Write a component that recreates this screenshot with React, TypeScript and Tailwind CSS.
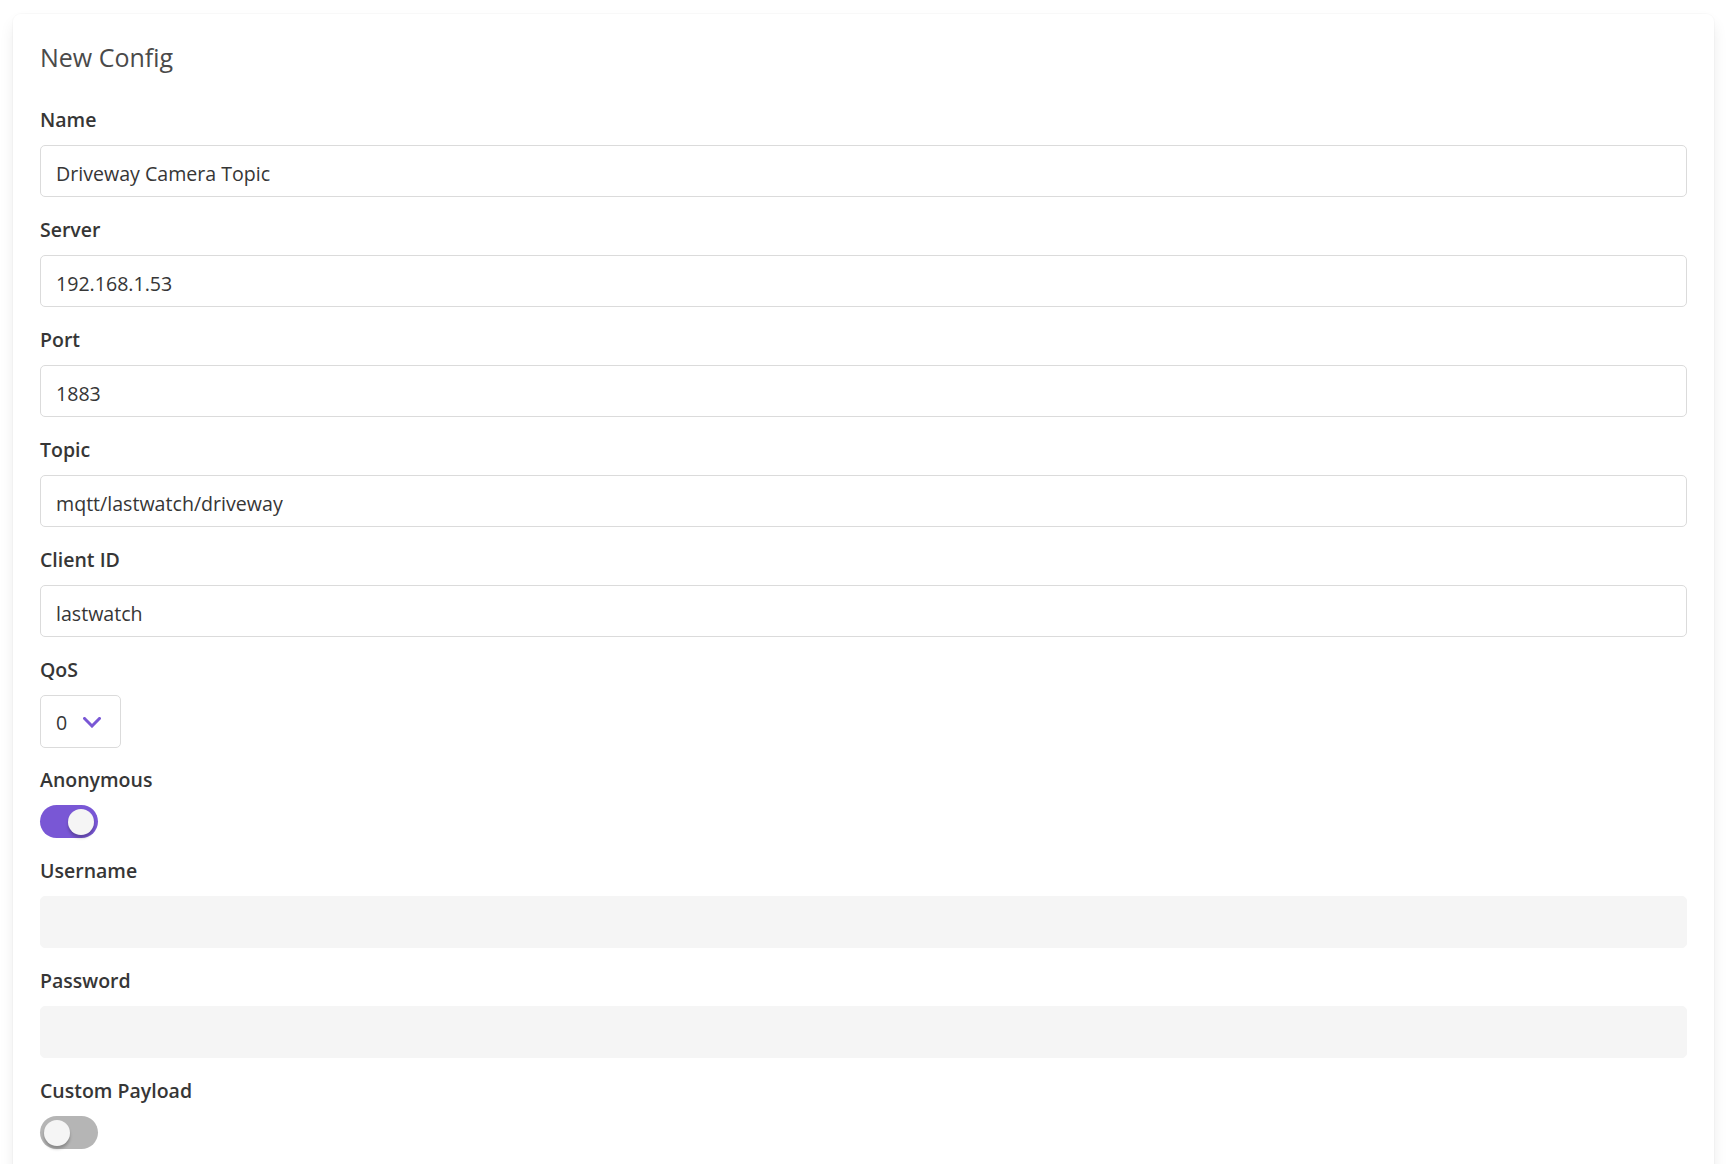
import React from "react";

const FIELDS = [
  { label: "Name", value: "Driveway Camera Topic" },
  { label: "Server", value: "192.168.1.53" },
  { label: "Port", value: "1883" },
  { label: "Topic", value: "mqtt/lastwatch/driveway" },
  { label: "Client ID", value: "lastwatch" },
];

const font = { fontFamily: '"Open Sans", "Noto Sans", sans-serif' };

const Label = ({ children }: { children: React.ReactNode }) => (
  <label className="block text-[19.5px] leading-[30px] font-semibold text-[#363636] mb-[10px]">
    {children}
  </label>
);

const TextInput = ({ value, disabled }: { value?: string; disabled?: boolean }) => (
  <input
    readOnly
    disabled={disabled}
    value={value ?? ""}
    className={
      "block w-full h-[52px] rounded-[5px] border px-[15px] pt-[4px] text-[19.6px] text-[#363636] outline-none " +
      (disabled ? "bg-[#f5f5f5] border-[#f5f5f5]" : "bg-white border-[#dbdbdb]")
    }
    style={font}
  />
);

const Toggle = ({ on }: { on: boolean }) => (
  <div
    className={
      "relative w-[58px] h-[33px] rounded-full " + (on ? "bg-[#7957d5]" : "bg-[#b5b5b5]")
    }
  >
    <span
      className={
        "absolute top-[3.5px] w-[26px] h-[26px] rounded-full bg-[#f5f5f5] shadow-[0_3px_3px_rgba(10,10,10,0.25)] " +
        (on ? "right-[4px]" : "left-[4px]")
      }
    />
  </div>
);

export default function App() {
  return (
    <div className="min-h-screen bg-white pt-[14px] pl-[13px]" style={font}>
      <div className="w-[1701px] rounded-[8px] bg-white px-[27px] pt-[25px] pb-[30px] shadow-[0_8px_16px_-2px_rgba(10,10,10,0.1),0_0_0_1px_rgba(10,10,10,0.02)]">
        <h1 className="text-[25px] leading-[36px] text-[#4a4a4a] mb-[30px]">New Config</h1>

        {FIELDS.map((f) => (
          <div key={f.label} className="mb-[18px]">
            <Label>{f.label}</Label>
            <TextInput value={f.value} />
          </div>
        ))}

        <div className="mb-[17px]">
          <Label>QoS</Label>
          <div className="flex items-center w-[81px] h-[53px] rounded-[5px] border border-[#dbdbdb] pl-[15px] pt-[2px] gap-[16px]">
            <span className="text-[19.6px] text-[#363636]">0</span>
            <svg width="18" height="11" viewBox="0 0 18 11" fill="none">
              <polyline
                points="1.5,1.5 9,9 16.5,1.5"
                stroke="#7957d5"
                strokeWidth="3"
                strokeLinecap="square"
              />
            </svg>
          </div>
        </div>

        <div className="mb-[18px]">
          <Label>Anonymous</Label>
          <Toggle on />
        </div>

        <div className="mb-[18px]">
          <Label>Username</Label>
          <TextInput disabled />
        </div>

        <div className="mb-[18px]">
          <Label>Password</Label>
          <TextInput disabled />
        </div>

        <div className="mb-[18px]">
          <Label>Custom Payload</Label>
          <Toggle on={false} />
        </div>
      </div>
    </div>
  );
}
